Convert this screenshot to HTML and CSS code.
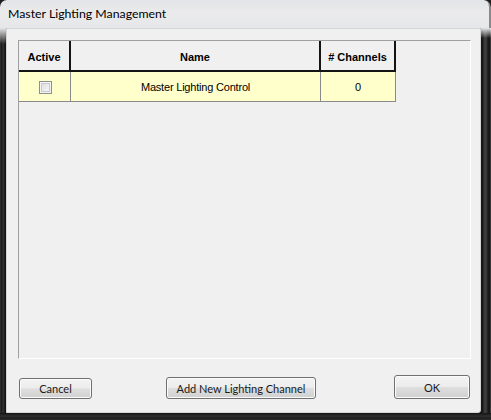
FILE: index.html
```html
<!DOCTYPE html>
<html>
<head>
<meta charset="utf-8">
<link rel="stylesheet" href="styles.css">
</head>
<body>
<div class="window">
  <div class="titlebar">Master Lighting Management</div>
  <div class="frame-mid">
    <div class="edge-left"></div>
    <div class="client">
      <div class="scrollpane">
        <div class="table">
          <div class="th">Active</div>
          <div class="th">Name</div>
          <div class="th"># Channels</div>
          <div class="td"><span class="checkbox"></span></div>
          <div class="td">Master Lighting Control</div>
          <div class="td">0</div>
        </div>
      </div>
      <div class="buttons">
        <button class="btn btn-cancel">Cancel</button>
        <button class="btn btn-add">Add New Lighting Channel</button>
        <button class="btn btn-ok">OK</button>
      </div>
    </div>
    <div class="edge-right"></div>
  </div>
  <div class="edge-bottom"></div>
</div>
</body>
</html>
```

FILE: styles.css
```css
* { box-sizing: border-box; }
html, body { margin: 0; padding: 0; }
body {
  width: 491px;
  height: 420px;
  overflow: hidden;
  background: #1e1e1e;
}
.window {
  width: 491px;
  height: 420px;
  display: flex;
  flex-direction: column;
  background: #1c1c1c;
  border-radius: 7px 7px 0 0;
  overflow: hidden;
}
.titlebar {
  height: 28px;
  flex: none;
  padding-left: 8px;
  line-height: 28px;
  font-family: Lato, "Open Sans", sans-serif;
  font-size: 12.3px;
  color: #000;
  background: linear-gradient(to bottom, #e2e4e7 0%, #ebebec 45%, #e6e7e9 100%);
  border-right: 2px solid #8a8a8a;
  border-top-right-radius: 7px;
}
.frame-mid {
  flex: 1;
  display: flex;
  min-height: 0;
}
.edge-left {
  width: 6px;
  flex: none;
  background:
    linear-gradient(to bottom, rgba(228,229,231,1) 0px, rgba(228,229,231,0) 16px),
    linear-gradient(to right, #3c3c3c 0px, #1a1a1a 1px, #1d1d1d 2px, #333 3px, #2a2a2a 4px, #141414 5px);
}
.edge-right {
  width: 10px;
  flex: none;
  background:
    linear-gradient(to bottom, rgba(228,229,231,1) 0px, rgba(228,229,231,0) 10px),
    linear-gradient(to right, #141414 0px, #1a1a1a 2px, #3a3a3a 3px, #3e3e3e 5px, #1c1c1c 7px, #151515 9px, #5a5a5a 10px);
}
.edge-bottom {
  height: 7px;
  flex: none;
  background: linear-gradient(to bottom, #141414 0px, #2e2e2e 3px, #1c1c1c 6px, #3a3a3a 7px);
}
.client {
  width: 475px;
  flex: none;
  background: #f0f0f0;
  border: 1px solid #d6d6d6;
  border-bottom-right-radius: 3px;
  padding: 11px 9px 0 11px;
  display: flex;
  flex-direction: column;
}
.scrollpane {
  height: 319px;
  flex: none;
  border-top: 1px solid #a0a0a0;
  border-left: 1px solid #a0a0a0;
  border-right: 1px solid #ffffff;
  border-bottom: 1px solid #ffffff;
  background: #f0f0f0;
}
.table {
  display: grid;
  grid-template-columns: 52px 250px 75px;
  grid-template-rows: 31px 30px;
  width: 377px;
  font-family: "Liberation Sans", Arial, sans-serif;
  font-size: 11px;
  color: #000;
}
.th {
  font-weight: bold;
  text-align: center;
  background: #f0f0f0;
  border-right: 2px solid #141414;
  border-bottom: 2px solid #141414;
  padding-top: 3px;
  line-height: 26px;
}
.td {
  background: #ffffcc;
  border-right: 1px solid #8a8a8a;
  border-bottom: 1px solid #8a8a8a;
  text-align: center;
  padding-top: 1px;
  line-height: 28px;
  letter-spacing: -0.2px;
  display: flex;
  align-items: center;
  justify-content: center;
}
.checkbox {
  display: block;
  width: 13px;
  height: 13px;
  margin-left: 1px;
  border: 1px solid #8e8f8f;
  background: linear-gradient(to bottom right, #d8d9da 0%, #eeeeee 60%, #fafafa 100%);
  box-shadow: inset 0 0 0 1px #f4f4f4, inset 0 0 0 2px #c9cacb;
}
.buttons {
  display: flex;
  align-items: flex-end;
  height: 23px;
  margin-top: 17px;
}
.btn {
  font-family: Lato, "Open Sans", sans-serif;
  font-size: 11px;
  font-weight: 400;
  color: #1a1a1a;
  padding: 0;
  border: 1px solid #707070;
  border-radius: 3px;
  background: linear-gradient(to bottom, #f3f3f3 0%, #ececec 48%, #dedede 52%, #d0d0d0 100%);
  box-shadow: inset 0 0 0 1px #fbfbfb;
  display: flex;
  align-items: center;
  justify-content: center;
}
.btn-cancel { width: 73px; height: 21px; margin-left: 1px; }
.btn-add { width: 150px; height: 22px; margin-left: 74px; }
.btn-ok { width: 76px; height: 24px; margin-left: 78px; }
```
